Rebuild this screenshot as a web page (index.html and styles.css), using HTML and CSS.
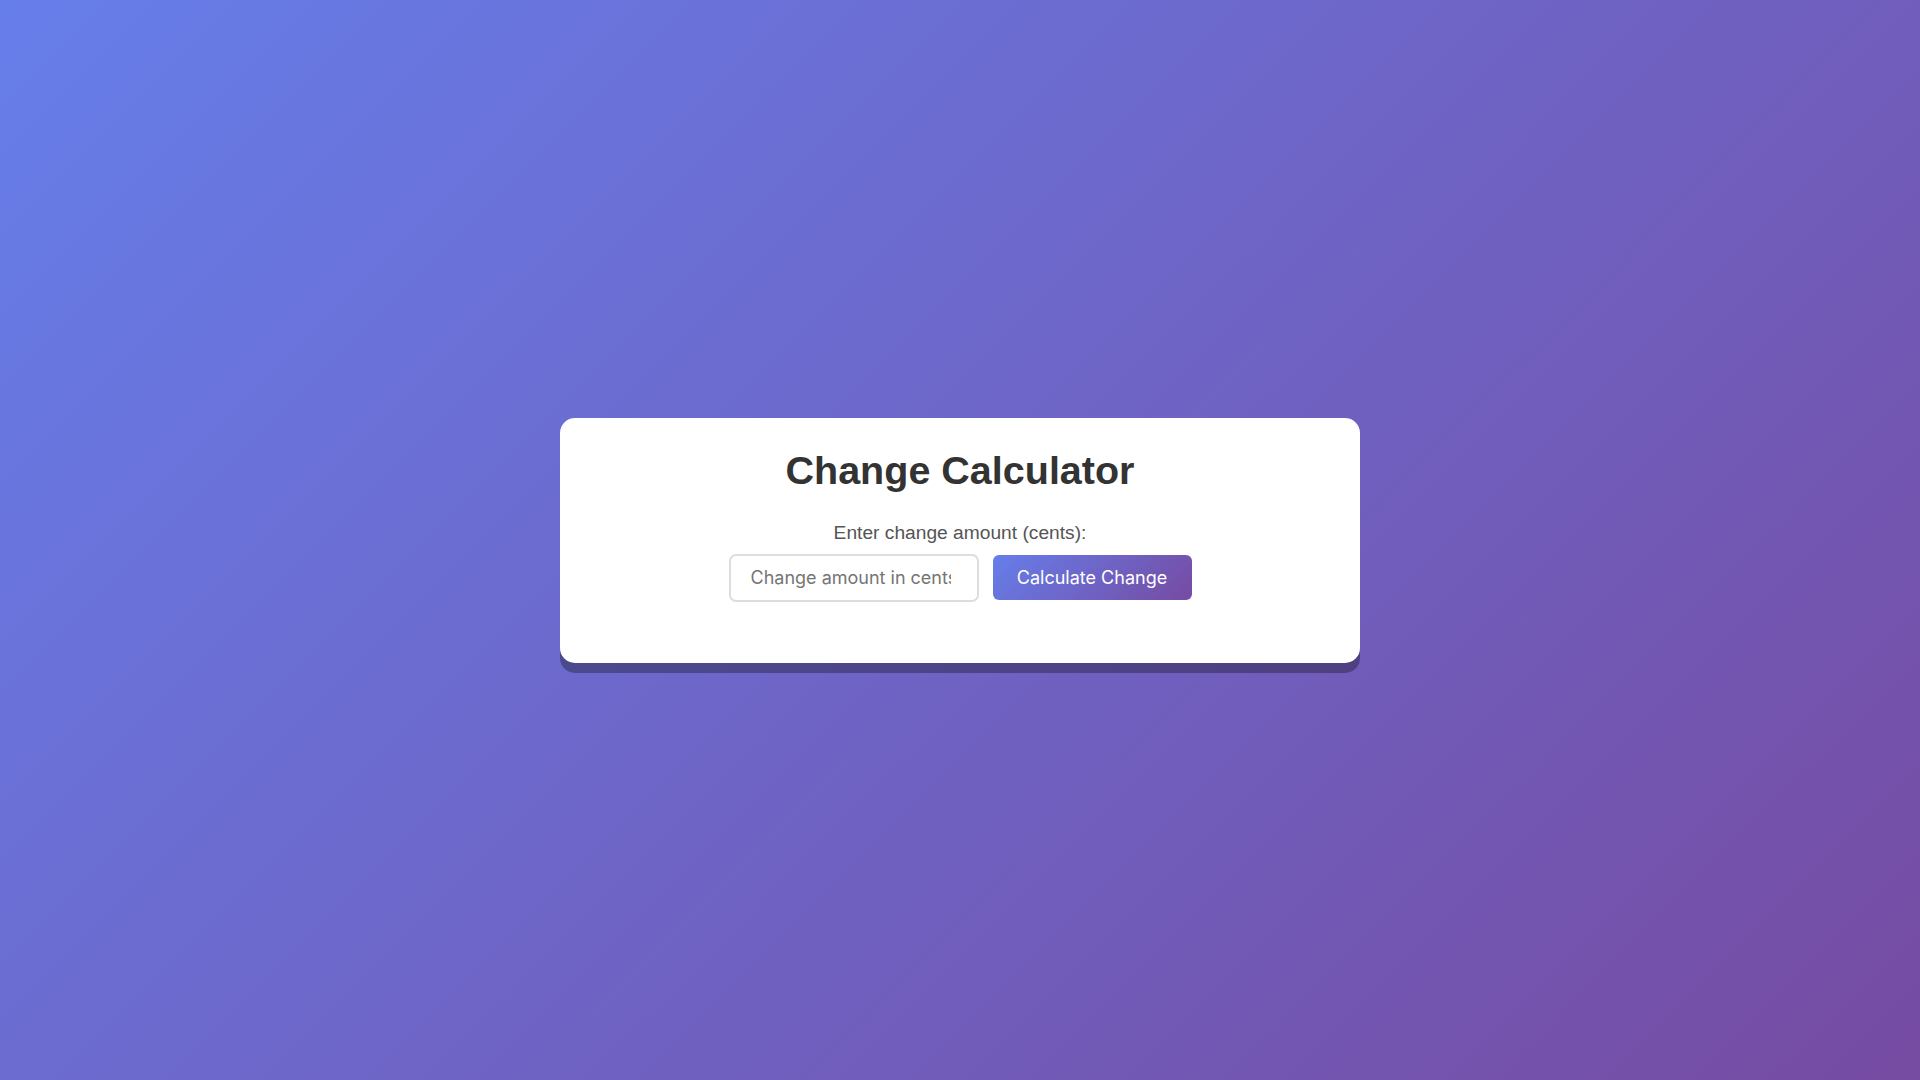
FILE: index.html
```html
<!DOCTYPE html>
<html lang="en">
<head>
<meta charset="utf-8">
<title>Change Calculator</title>
<link rel="stylesheet" href="styles.css">
</head>
<body>
<main class="card">
  <h1 class="title">Change Calculator</h1>
  <label class="label" for="amount">Enter change amount (cents):</label>
  <div class="row">
    <input id="amount" class="amount" type="number" placeholder="Change amount in cents">
    <button class="calc" type="button">Calculate Change</button>
  </div>
  <div class="result"></div>
</main>
</body>
</html>
```

FILE: styles.css
```css
* { box-sizing: border-box; }
html, body { margin: 0; padding: 0; }
body {
  min-height: 100vh;
  background: linear-gradient(135deg, #667eea 0%, #764ba2 100%);
  display: flex;
  align-items: center;
  justify-content: center;
  font-family: "Liberation Sans", Arial, sans-serif;
}
.card {
  width: 800px;
  background: #fff;
  border-radius: 15px;
  padding: 29px 40px 30px;
  box-shadow: 0 10px 0 rgba(0, 0, 0, 0.3);
  display: flex;
  flex-direction: column;
  align-items: center;
}
.title {
  margin: 0 0 29px;
  font-size: 39.5px;
  line-height: 46px;
  font-weight: bold;
  color: #333;
}
.label {
  display: block;
  font-size: 19.2px;
  line-height: 22px;
  color: #555;
  margin-bottom: 10px;
}
.row {
  display: flex;
  gap: 14px;
  align-items: center;
}
.amount {
  width: 250px;
  height: 48px;
  padding: 0 11px 0 20px;
  border: 2px solid #ddd;
  border-radius: 7px;
  font-family: Inter, sans-serif;
  font-size: 18px;
  color: #333;
  outline: none;
  background: #fff;
}
.amount::placeholder { color: #757575; }
.calc {
  width: 199px;
  height: 45px;
  border: none;
  border-radius: 6px;
  background: linear-gradient(135deg, #667eea 0%, #764ba2 100%);
  color: #fff;
  font-family: Inter, sans-serif;
  font-size: 18px;
  cursor: pointer;
}
.result {
  height: 31px;
}
```
